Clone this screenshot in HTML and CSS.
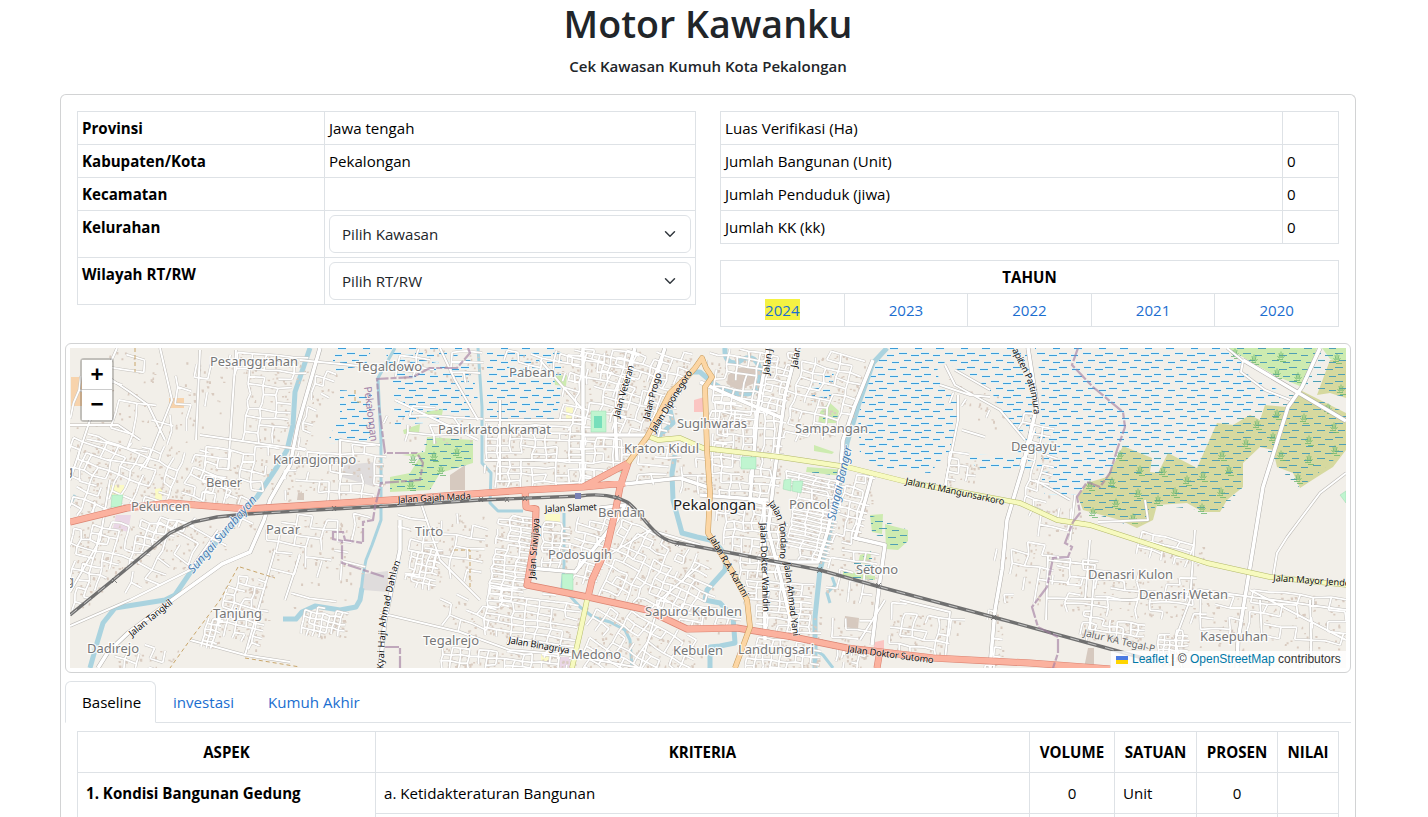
FILE: index.html
```html
<!DOCTYPE html>
<html lang="id">
<head>
<meta charset="utf-8">
<title>Motor Kawanku</title>
<link rel="stylesheet" href="styles.css">
</head>
<body>
<main class="container">
  <h1 class="title">Motor Kawanku</h1>
  <p class="subtitle">Cek Kawasan Kumuh Kota Pekalongan</p>
  <section class="card">
    <div class="summary">
      <table class="table info">
        <tr><th>Provinsi</th><td>Jawa tengah</td></tr>
        <tr><th>Kabupaten/Kota</th><td>Pekalongan</td></tr>
        <tr><th>Kecamatan</th><td></td></tr>
        <tr class="tall"><th>Kelurahan</th><td><div class="select"><span>Pilih Kawasan</span><svg class="chevron" viewBox="0 0 16 16"><path d="m2 5 6 6 6-6"/></svg></div></td></tr>
        <tr class="tall"><th>Wilayah RT/RW</th><td><div class="select"><span>Pilih RT/RW</span><svg class="chevron" viewBox="0 0 16 16"><path d="m2 5 6 6 6-6"/></svg></div></td></tr>
      </table>
      <div class="side">
        <table class="table totals">
          <tr><td>Luas Verifikasi (Ha)</td><td class="num"></td></tr>
          <tr><td>Jumlah Bangunan (Unit)</td><td class="num">0</td></tr>
          <tr><td>Jumlah Penduduk (jiwa)</td><td class="num">0</td></tr>
          <tr><td>Jumlah KK (kk)</td><td class="num">0</td></tr>
        </table>
        <table class="table years">
          <tr><th colspan="5">TAHUN</th></tr>
          <tr><td><a class="current">2024</a></td><td><a>2023</a></td><td><a>2022</a></td><td><a>2021</a></td><td><a>2020</a></td></tr>
        </table>
      </div>
    </div>

    <div class="map-frame">
      <div class="map">
        <svg class="tiles" viewBox="70 348 1276 320">
          <defs>
            <path id="dashes" d="M1 3.5h8M14 5.5h8M26 3.5h7M37 5.5h8M4 10.5h7M16 12.5h8M29 10.5h8M41 12.5h5M0 12.5h2M1 17.5h8M13 19.5h7M25 17.5h8M37 19.5h8M5 24.5h8M18 26.5h7M30 24.5h7M41 26.5h5M0 26.5h2"/>
            <pattern id="marsh" width="46" height="28" patternUnits="userSpaceOnUse"><use href="#dashes" class="marsh-glow"/><use href="#dashes" class="marsh-dash"/></pattern>
            <pattern id="swamp" width="46" height="28" patternUnits="userSpaceOnUse"><use href="#dashes" class="swamp-dash"/></pattern>
            <path id="tuft" class="tuft" d="M-3.5 0l2 2.5M-2 -3l1 5M0 -4.5v6.5M2 -3l-1 5M3.5 0l-2 2.5M-4 3.5h6M-1 5.5h6"/>
            <path id="local" d="M320 348L298 425L290 465L270 500L264 520L250 552L222 564L172 600L128 633L108 652L98 668M583 348V485M635 348L615 415L617 460M665 348L645 405M583 435H650M768 348L758 405L750 500L770 505M797 348L785 395L775 470L768 530L780 575L795 640M700 382L740 400L782 418M700 495L768 500M625 484L680 478L710 488M873 360L855 405L843 440L841 465L828 530L818 562H788M872 475L855 538L885 545L880 580L872 645M764 500L765 640M600 508L625 505L617 520L575 572L530 568M400 520V550L385 620L380 668M1028 348L1037 405L1022 470L1007 520L1002 570L995 610L990 668M1243 360L1346 421M1320 348L1302 387L1288 407L1263 487L1250 567L1238 640L1237 668"/>
            <path id="lane" d="M117 348L105 375L70 480M380 613L460 632L510 650L570 655L640 668M1022 470L1035 428M1227 348L1243 361L1241 372L1265 390L1290 400M1346 473L1320 493L1287 537L1277 553L1273 577M945 365L955 385L1000 410L1025 440M940 385L970 395L990 397M955 370L990 390M958 395V420L945 485M962 430L985 437M70 626L130 600L190 570L218 530M70 425H118L140 440M300 360L420 372M100 372L130 392L148 405L165 440M160 348L172 400L150 455L140 470M200 435L305 450M200 350L196 440M236 350L228 470M70 592L100 540L110 480M190 640L245 655L290 662M245 655L275 550M300 555L285 600M340 480V440L380 445M440 348L455 380L478 420M500 400V480M540 360L583 410M485 420H583M485 460H583M395 400L478 440M420 500L440 560L480 600M640 668L660 600L700 565M600 560L650 530L700 545M900 600L950 612L945 660M885 600L860 640M1047 560L1095 565L1090 630M1047 598L1130 600L1200 590L1346 610M1090 540L1085 600M1195 530L1190 600L1175 640L1182 668M1250 590L1346 640M1310 600L1312 668M1260 600L1262 640M1048 555L1046 620M1145 500L1148 520L1098 522M1075 495L1070 540M1035 480L1070 500"/>
            <path id="trunk" d="M70 522L127 508L170 503L247 509L390 500L457 495L527 490L583 487L625 483M583 487L628 463L620 487L615 513L607 547L592 580L588 597M525 490L526 507L536 509L535 540L527 585L588 597L647 610L687 629L737 628L793 637L847 648L933 658L1030 663L1110 669M880 650L877 668"/>
            <path id="secondary" d="M650 437L658 440L680 438L703 448L780 457L847 467L907 482L1020 503L1057 520L1090 525L1207 563L1270 577L1347 585M587 600L580 633L572 668"/>
            <path id="primary" d="M628 463L647 437L670 393L687 377L695 368L702 358L706 368L712 377L705 387L707 450L710 493L708 533L733 573L747 600L750 627L735 668"/>
            <path id="railway" d="M70 615L113 580L170 533L193 522L217 517L247 514L333 509L390 506L480 500L580 496Q600 493 618 498L627 502C642 512 652 537 673 542L710 549L820 570L880 587L993 617L1103 647L1150 660"/>
            <path id="kyai" d="M383 678L386 620L397 570L408 545"/>
            <path id="tondano" d="M768 504Q785 522 779 562"/>
            <path id="pattimura" d="M1012 350L1026 378Q1033 395 1034 418"/>
          </defs>
          <rect class="land" x="70" y="348" width="1276" height="320"/>

          <g class="wet">
            <path d="M888 348H1222L1243 360V372L1268 385L1290 395L1262 406L1230 424L1214 428L1196 468L1168 455L1160 472L1150 470L1120 446L1112 470L1090 482L1075 495L1045 495L1040 470L1018 470L980 470L960 453L945 455L930 473L885 470L860 455L858 415L875 363Z"/>
            <path d="M333 348H372L366 365L333 372ZM340 390L372 392L370 446L327 443L340 415ZM392 370L470 358L478 400L468 420L395 425ZM487 348H562L560 400L555 422L487 420ZM385 348H465L455 358L390 372ZM811 380L825 370L834 368L832 398L812 402ZM1308 362L1318 348L1330 348L1316 380L1304 392Z"/>
          </g>
          <path class="land" d="M935 372L945 362L992 392L1000 412L1024 436L1015 458L962 452L950 448L957 425V402ZM1028 348H1035L1042 385L1040 430L1030 432L1033 400Z"/>

          <g class="green">
            <path d="M427 437L473 440V463L440 473L430 490L390 492V477L410 473L420 457L402 455L425 452ZM403 430L420 424L419 433L404 434ZM425 412L443 409L442 415L426 417ZM554 376L567 375L566 386L555 385Z"/>
            <path d="M820 412L829 402L839 411L836 423L818 423ZM807 467L845 470L843 476L806 472ZM870 515L883 514L882 534L872 532ZM885 524L908 530V541L898 550L886 549ZM860 555L871 551L870 564L858 563ZM843 571L875 576V580L843 577ZM814 445L834 452L832 454L814 451Z"/>
            <path d="M1227 348H1317L1302 387L1274 375ZM1322 348H1346V366L1330 359Z"/>
          </g>
          <path class="olive" d="M1123 446L1152 458L1150 472L1158 473L1168 453L1197 468L1217 423L1233 425L1250 415L1260 420L1265 405L1287 407L1300 390L1346 413V450L1333 467L1317 477L1300 488L1293 473L1277 467L1273 450L1260 447L1243 463V487L1227 500L1220 512H1203L1187 503L1157 505L1153 520L1137 528L1120 520L1083 510L1078 497L1087 483L1107 477ZM1330 360H1346V398L1330 393L1317 395Z"/>
          <g class="swamp">
            <path d="M1123 446L1168 453L1197 468L1217 423L1265 405L1300 390L1346 413V450L1300 488L1277 467L1260 447L1243 463V487L1220 512L1157 505L1137 528L1083 510L1078 497L1107 477ZM1227 348H1346V398L1330 393L1302 387L1274 375Z"/>
            <path d="M427 437L473 440V463L440 473L430 490L390 492V477L410 473L420 457ZM820 412L839 411L836 423L818 423ZM807 467L845 470L843 476L806 472ZM870 515L908 530V541L898 550L872 532ZM843 571L871 551L875 580L843 577Z"/>
          </g>
          <g id="tufts"></g>

          <path class="sand" d="M71 377H84V406H71ZM169 398H184V408H169Z"/>
          <path class="school" d="M109 485H124V496H109ZM155 489L162 488V500L155 499ZM566 407L573 408V419H566ZM545 514H560V522H545ZM541 651H550V661H541Z"/>
          <path class="industry" d="M344 465L375 462V487L342 477ZM363 574L388 571V592L363 590Z"/>
          <path class="market" d="M116 515H131L128 532L113 528ZM560 657H570V668H560Z"/>
          <path class="hospital" d="M694 400L708 396V412H694ZM875 642L884 640V650H873Z"/>
          <path class="building" d="M728 375L738 368L755 366L757 382L738 390L727 384ZM845 616L859 618L858 629L844 627ZM298 493H304V500H297ZM450 475L465 465V490H450ZM1088 648H1094V668H1084Z"/>

          <g class="water">
            <path d="M310 348L295 392L293 425L287 450L277 467L257 497L233 523L192 570L175 595L165 600L115 608L103 623L97 643L90 668"/>
            <path class="thin" d="M395 348L378 378L379 400L381 440L381 490L381 520L372 545L366 560L363 575L360 600"/>
            <path d="M362 588L360 600L356 607L340 610L315 606L302 612L296 619L283 619"/>
            <path class="thin" d="M478 348L482 407V463L491 473L490 503L498 511H523M564 513V567L562 587L580 607L593 617L610 622L625 630L630 640L632 668"/>
            <path d="M725 348Q724 364 737 363Q754 350 760 369Q762 392 747 394Q730 395 713 383L700 372L690 372M670 410L673 423L658 437M675 455L672 473L673 500L682 533L697 537L710 540Q728 550 725 570L707 590L705 600L720 603L733 617L735 643L720 646L710 647V668"/>
            <path d="M887 348L873 363L860 400L847 443L843 467L837 497L828 540L820 570L815 617V668"/>
            <path class="thin" d="M815 650L823 655L833 668M832 577L835 585L827 593L830 603M70 505L75 495"/>
          </g>

          <g id="buildings" class="houses"></g>
          <path id="street-casing" class="street-casing"/>
          <use href="#lane" class="lane-casing"/>
          <use href="#local" class="local-casing"/>
          <path id="street-fill" class="street-fill"/>
          <use href="#lane" class="lane"/>
          <use href="#local" class="local"/>
          <path class="park" d="M112 495H123L121 507H111ZM741 457H756V469H741ZM784 480L791 479V491L783 489ZM793 481H803L801 493L792 491ZM562 574H573V590H562ZM591 411H606V432H591ZM620 472L624 468V477ZM1340 495L1346 491V503Z"/>
          <path class="pitch" d="M594 416H602V428H594Z"/>

          <use href="#trunk" class="trunk-casing"/><use href="#trunk" class="trunk"/>
          <use href="#secondary" class="secondary-casing"/><use href="#secondary" class="secondary"/>
          <use href="#primary" class="primary-casing"/><use href="#primary" class="primary"/>
          <use href="#railway" class="rail"/><use href="#railway" class="rail-dash"/>
          <path class="crossing" d="M332 506l4 5m0-5l-4 5M479 497l4 5m0-5l-4 5M505 497l4 5m0-5l-4 5M523 496l4 5m0-5l-4 5M615 495l4 5m0-5l-4 5M675 541l4 5m0-5l-4 5M817 567l5 6m0-6l-5 6M876 583l5 5m0-5l-5 5M991 615l5 5m0-5l-5 5M112 578l5 5m0-5l-5 5"/>
          <rect class="station" x="575" y="493" width="6" height="6"/>
          <path class="border-line" d="M1078 348L1072 365L1093 387L1123 412L1125 427L1117 450L1110 473L1100 487L1087 482L1077 497L1080 513L1073 522L1065 543L1072 547L1068 557L1053 558L1047 587L1032 607L1038 627L1058 637V653L1053 668M468 348L470 353L457 368L430 368L413 377L377 379L379 407L385 453H417L423 463L420 480L381 483L375 507L373 520L363 522V543L345 540L343 532H333V539L342 541V563L385 577M385 647H400V668"/>
          <path class="track" d="M135 348V372M238 567L220 600L190 640L170 668M240 567L275 578M454 550H470V590M245 658L300 667M355 390V402H363"/>

          <g class="place">
            <text x="210" y="366" textLength="88">Pesanggrahan</text>
            <text x="356" y="371" textLength="66">Tegaldowo</text>
            <text x="509" y="377" textLength="46">Pabean</text>
            <text x="438" y="434" textLength="113">Pasirkratonkramat</text>
            <text x="273" y="464" textLength="83">Karangjompo</text>
            <text x="206" y="487" textLength="36">Bener</text>
            <text x="131" y="511" textLength="59">Pekuncen</text>
            <text x="266" y="534" textLength="34">Pacar</text>
            <text x="415" y="536" textLength="28">Tirto</text>
            <text x="213" y="618" textLength="49">Tanjung</text>
            <text x="87" y="653" textLength="52">Dadirejo</text>
            <text x="423" y="645" textLength="56">Tegalrejo</text>
            <text x="571" y="659" textLength="50">Medono</text>
            <text x="548" y="559" textLength="64">Podosugih</text>
            <text x="598" y="517" textLength="47">Bendan</text>
            <text x="624" y="453" textLength="75">Kraton Kidul</text>
            <text x="677" y="428" textLength="70">Sugihwaras</text>
            <text x="795" y="433" textLength="73">Sampangan</text>
            <text x="789" y="509" textLength="41">Poncol</text>
            <text x="856" y="574" textLength="42">Setono</text>
            <text x="645" y="616" textLength="97">Sapuro Kebulen</text>
            <text x="673" y="655" textLength="50">Kebulen</text>
            <text x="738" y="654" textLength="76">Landungsari</text>
            <text x="1011" y="451" textLength="46">Degayu</text>
            <text x="1088" y="579" textLength="85">Denasri Kulon</text>
            <text x="1139" y="599" textLength="89">Denasri Wetan</text>
            <text x="1200" y="641" textLength="68">Kasepuhan</text>
            <text class="city" x="673" y="510" textLength="83">Pekalongan</text>
            <text x="65" y="475">g</text>
            <text x="66" y="585">g</text>
          </g>
          <g class="road-name">
            <text transform="translate(398 503) rotate(-3)" textLength="73">Jalan Gajah Mada</text>
            <text transform="translate(545 512) rotate(-2)" textLength="52">Jalan Slamet</text>
            <text transform="translate(535 579) rotate(-86)" textLength="61">Jalan Sriwijaya</text>
            <text transform="translate(619 418) rotate(-74)" textLength="54">Jalan Veteran</text>
            <text transform="translate(649 420) rotate(-75)" textLength="48">Jalan Progo</text>
            <text transform="translate(655 433) rotate(-58)" textLength="71">Jalan Diponegoro</text>
            <text transform="translate(769 375) rotate(-83)">Jalan J</text>
            <text transform="translate(797 368) rotate(-80)">Jalan</text>
            <text transform="translate(132 637) rotate(-39)" textLength="53">Jalan Tangkil</text>
            <text><textPath href="#kyai" textLength="118">n Kyai Haji Ahmad Dahlan</textPath></text>
            <text transform="translate(508 643) rotate(10)" textLength="62">Jalan Binagriya</text>
            <text transform="translate(709 538) rotate(60)" textLength="69">Jalan R.A. Kartini</text>
            <text><textPath href="#tondano" textLength="58">Jalan Tondano</textPath></text>
            <text transform="translate(760 523) rotate(88)" textLength="89">Jalan Dokter Wahidin</text>
            <text transform="translate(784 563) rotate(83)" textLength="74">Jalan Ahmad Yani</text>
            <text transform="translate(905 484) rotate(12)" textLength="101">Jalan Ki Mangunsarkoro</text>
            <text transform="translate(847 652) rotate(7.5)" textLength="87">Jalan Doktor Sutomo</text>
            <text><textPath href="#pattimura" textLength="69">apiten Pattimura</textPath></text>
            <text transform="translate(1273 581) rotate(4)" textLength="77">Jalan Mayor Jende</text>
            <text class="rail-name" transform="translate(1083 636) rotate(13)" textLength="73">Jalur KA Tegal-P</text>
          </g>
          <g class="river-name">
            <text transform="translate(193 574) rotate(-49)" textLength="98">Sungai Surabayan</text>
            <text transform="translate(835 521) rotate(-77)" textLength="76">Sungai Banger</text>
          </g>
          <text class="district-name" transform="translate(364 387) rotate(83)" textLength="55">Pekalongan</text>
        </svg>
        <div class="zoom"><a class="zoom-in">+</a><a>−</a></div>
        <div class="attribution"><svg class="flag" viewBox="0 0 12 8"><path class="flag-top" d="M0 0h12v4H0z"/><path class="flag-bottom" d="M0 4h12v4H0z"/></svg><span><a>Leaflet</a> | © <a>OpenStreetMap</a> contributors</span></div>
      </div>
    </div>

    <nav class="tabs"><a class="tab active">Baseline</a><a class="tab">investasi</a><a class="tab">Kumuh Akhir</a></nav>
    <div class="detail">
      <table class="table aspects">
        <colgroup><col class="c-aspek"><col class="c-kriteria"><col class="c-volume"><col class="c-satuan"><col class="c-prosen"><col class="c-nilai"></colgroup>
        <tr><th>ASPEK</th><th>KRITERIA</th><th>VOLUME</th><th>SATUAN</th><th>PROSEN</th><th>NILAI</th></tr>
        <tr><td rowspan="2" class="aspect">1. Kondisi Bangunan Gedung</td><td>a. Ketidakteraturan Bangunan</td><td class="mid">0</td><td>Unit</td><td class="mid">0</td><td></td></tr>
        <tr><td></td><td></td><td></td><td></td><td></td></tr>
      </table>
    </div>
  </section>
</main>
<script src="map.js"></script>
</body>
</html>
```
FILE: styles.css
```css
* { box-sizing: border-box; }
body { margin: 0; width: 1416px; height: 817px; overflow: hidden; background: #fff; color: #212529; font: 15.1px/24px "Open Sans", "Noto Sans", sans-serif; }
a { color: #1b6ed0; text-decoration: none; }
.container { width: 1320px; height: 817px; overflow: hidden; margin: 0 auto; padding: 0 12px; }
.title { margin: 0 0 8px; font-size: 37.6px; line-height: 48px; font-weight: 600; text-align: center; }
.subtitle { margin: 0 0 18px; font-size: 15px; line-height: 20px; font-weight: 600; text-align: center; }
.card { height: 723px; overflow: hidden; border: 1px solid #d2d3d4; border-bottom: 0; border-radius: 6px 6px 0 0; }
.summary { display: grid; grid-template-columns: 619px 619px; gap: 24px; padding: 16px 16px 0; height: 248px; align-items: start; }
.side { display: grid; gap: 16px; }
.table { width: 100%; border-collapse: collapse; table-layout: fixed; color: #000; }
.table td, .table th { height: 33px; padding: 4px; border: 1px solid #dee2e6; text-align: left; vertical-align: top; white-space: nowrap; }
.table th { font-weight: 700; }
.info th { width: 247px; }
.info .tall td, .info .tall th { height: 47px; }
.select { display: flex; justify-content: space-between; align-items: center; height: 38px; padding: 0 12px; border: 1px solid #dee2e6; border-radius: 6px; color: #212529; }
.chevron { width: 16px; height: 12px; fill: none; stroke: #343a40; stroke-width: 2; stroke-linecap: round; stroke-linejoin: round; }
.totals .num { width: 56px; }
.table.years th, .table.years td { text-align: center; }
.current { display: inline-block; height: 21px; line-height: 22px; background: #f5f242; }

.map-frame { margin: 0 4px; height: 330px; padding: 4px; border: 1px solid #d2d3d4; border-radius: 6px; }
.map { position: relative; width: 1276px; height: 320px; overflow: hidden; }
.tiles { display: block; width: 1276px; height: 320px; }
.zoom { position: absolute; left: 10px; top: 10px; width: 34px; border: 2px solid rgba(0,0,0,.2); border-radius: 4px; background-clip: padding-box; }
.zoom a { display: block; height: 30px; background: #fff; color: #000; font: bold 21px/28px "DejaVu Sans Mono", monospace; text-align: center; }
.zoom .zoom-in { height: 30px; border-bottom: 1px solid #ccc; }
.attribution { position: absolute; right: 0; bottom: 0; display: flex; align-items: center; gap: 4px; width: 235px; height: 17px; padding: 0 5px; background: rgba(255,255,255,.8); color: #333; font: 12px/17px "Liberation Sans", sans-serif; white-space: nowrap; }
.attribution a { color: #0078a8; }
.flag { width: 12px; height: 8px; }
.flag-top { fill: #4c7be1; }
.flag-bottom { fill: #ffd500; }

.land { fill: #f2efe9; }
.wet { fill: url(#marsh); }
.marsh-glow { fill: none; stroke: #dcf2f8; stroke-width: 3; }
.marsh-dash { fill: none; stroke: #3d9bd6; stroke-width: 1.2; }
.swamp { fill: url(#swamp); }
.swamp-dash { fill: none; stroke: #4f9fb4; stroke-width: 1; }
.green { fill: #cdebb0; }
.olive { fill: #d6d99f; }
.tuft { fill: none; stroke: #6cb86e; stroke-width: .8; }
.park { fill: #c0f5d0; stroke: #9ed9b0; stroke-width: .5; }
.pitch { fill: #77dfbb; }
.sand { fill: #f7d3ac; }
.school { fill: #fbfac5; }
.industry { fill: #dfdcdc; }
.market { fill: #ead7e6; }
.hospital { fill: #fbc5c2; }
.building { fill: #d6c9bf; }
.houses { fill: #d9cbc0; }
.water { fill: none; stroke: #aad3df; stroke-width: 5; stroke-linejoin: round; }
.water .thin { stroke-width: 3; }
.street-casing, .street-fill, .lane, .lane-casing, .local, .local-casing, .trunk, .trunk-casing, .primary, .primary-casing, .secondary, .secondary-casing { fill: none; stroke-linejoin: round; }
.street-casing { stroke: #c4c1bd; stroke-width: 2.7; }
.street-fill { stroke: #fff; stroke-width: 1.8; }
.lane-casing { stroke: #bdbab6; stroke-width: 3; }
.lane { stroke: #fff; stroke-width: 2; }
.local-casing { stroke: #b0adaa; stroke-width: 4.6; }
.local { stroke: #fff; stroke-width: 3.6; }
.trunk-casing { stroke: #db8371; stroke-width: 7; }
.trunk { stroke: #fbb29f; stroke-width: 5.8; }
.primary-casing { stroke: #c59a5a; stroke-width: 5.6; }
.primary { stroke: #fcd6a4; stroke-width: 4.6; }
.secondary-casing { stroke: #b3b96a; stroke-width: 5.4; }
.secondary { stroke: #f7fabf; stroke-width: 4.4; }
.rail { fill: none; stroke: #707070; stroke-width: 3.4; }
.rail-dash { fill: none; stroke: #ccc; stroke-width: .9; stroke-dasharray: 9 9; }
.crossing { fill: none; stroke: #666; stroke-width: .8; }
.station { fill: #7a81b5; }
.border-line { fill: none; stroke: #a37fa3; stroke-width: 2.2; stroke-opacity: .65; stroke-dasharray: 14 2 6 2; }
.track { fill: none; stroke: #c9a66b; stroke-width: 1; stroke-dasharray: 4 3; }
.place, .road-name, .river-name { font-family: "Noto Sans", sans-serif; paint-order: stroke; stroke: #fff; stroke-opacity: .85; stroke-width: 2.5; stroke-linejoin: round; }
.place { fill: #777; font-size: 13px; }
.place .city { fill: #222; font-size: 15px; }
.road-name { fill: #111; font-size: 9.4px; stroke-width: 1.2; stroke-opacity: .5; }
.road-name .rail-name { fill: #666; font-size: 10px; }
.river-name { fill: #4d80b3; font-size: 12px; font-style: italic; stroke-width: 1.5; }
.district-name { fill: #a080a5; font: 10.5px "Noto Sans", sans-serif; }

.tabs { display: flex; margin: 8px 4px 0; height: 42px; border-bottom: 1px solid #dee2e6; }
.tab { height: 42px; padding: 8px 16px; border: 1px solid transparent; border-radius: 6px 6px 0 0; }
.tab.active { width: 91px; color: #000; background: #fff; border-color: #dee2e6 #dee2e6 #fff; }
.detail { padding: 8px 16px; }
.table.aspects td, .table.aspects th { height: 41px; padding: 8px; }
.table.aspects th, .table.aspects .mid { text-align: center; }
.table.aspects .aspect { font-weight: 700; }
.c-aspek { width: 298px; }
.c-kriteria { width: 654px; }
.c-volume { width: 85px; }
.c-satuan { width: 82px; }
.c-prosen { width: 81px; }
.c-nilai { width: 61px; }
```
FILE: map.js
```js
// Residential blocks: [outline, rotation in degrees, block width, block height, density]
const blocks = [
  ["70,348 165,348 150,430 100,500 70,515", 12, 20, 15, .5],
  ["165,348 235,355 200,420 165,440", 8, 16, 14, .5],
  ["236,348 300,348 280,440 235,440", 5, 14, 8, .75],
  ["70,430 200,450 250,500 170,500 70,515", 22, 11, 9, .65],
  ["195,440 275,445 255,500 190,490", 8, 12, 9, .65],
  ["70,525 180,515 190,522 110,575 70,608", 14, 9, 8, .75],
  ["150,520 250,515 200,560 120,590", 28, 14, 11, .5],
  ["270,515 370,512 340,560 255,560", 9, 14, 10, .6],
  ["290,450 375,440 378,500 275,500", 3, 11, 10, .65],
  ["310,370 330,370 300,450 292,440", 15, 9, 8, .7],
  ["232,570 265,575 255,650 215,625", 14, 9, 7, .75],
  ["205,620 222,610 215,650 200,640", 14, 5, 6, .9],
  ["305,605 345,612 340,635 298,628", 12, 6, 6, .9],
  ["265,550 380,560 350,600 270,600", 12, 24, 20, .4],
  ["390,515 480,510 480,575 405,575", 8, 15, 11, .55],
  ["410,545 440,550 430,585 405,580", 12, 6, 6, .85],
  ["385,340 480,348 480,375 385,375", 5, 17, 10, .5],
  ["385,400 480,420 480,440 385,440", 2, 24, 9, .5],
  ["485,348 610,348 610,375 560,380", 12, 12, 9, .6],
  ["485,420 582,422 582,485 485,487", 2, 12, 7, .8],
  ["560,350 635,350 615,415 560,430", 12, 13, 8, .75],
  ["610,350 690,350 660,430 615,430", 18, 9, 8, .8],
  ["583,437 625,437 625,460 583,483", 2, 9, 8, .75],
  ["630,440 705,455 705,490 630,480", 2, 15, 9, .65],
  ["497,515 530,515 525,590 495,610 480,570", 8, 12, 5, .9],
  ["540,520 565,520 562,565 540,565", 4, 9, 5, .85],
  ["565,515 610,515 585,580 570,580", 17, 12, 7, .75],
  ["620,505 700,550 710,600 670,610 595,590", 25, 9, 8, .75],
  ["480,580 520,590 580,600 570,660 480,630", 8, 13, 7, .85],
  ["440,590 480,590 500,640 440,620", 22, 14, 11, .55],
  ["440,645 575,655 565,668 440,668", 5, 9, 7, .8],
  ["595,600 640,612 700,635 680,668 580,668", 32, 10, 9, .75],
  ["640,600 700,600 740,625 690,628", 8, 12, 8, .7],
  ["705,348 765,348 755,410 710,450", 8, 10, 8, .75],
  ["710,400 780,410 770,500 710,495", 4, 10, 8, .8],
  ["768,350 790,350 780,410 760,410", 12, 8, 6, .8],
  ["800,350 865,350 850,390 838,430 785,440 785,385", 14, 12, 8, .75],
  ["785,470 840,480 820,560 785,555", 12, 15, 4, .9],
  ["710,500 780,505 780,580 735,570", 4, 9, 8, .75],
  ["740,580 810,580 812,640 752,627", 4, 11, 6, .85],
  ["752,635 815,645 812,668 740,668", 6, 8, 7, .75],
  ["845,475 870,475 850,545 833,540", 13, 9, 7, .65],
  ["833,545 880,550 870,600 825,590", 7, 12, 10, .6],
  ["822,605 870,615 865,650 820,645", 5, 13, 10, .5],
  ["885,600 955,620 940,655 875,645", 8, 12, 8, .7],
  ["990,540 1060,540 1050,600 1000,580", 9, 15, 12, .45],
  ["1022,410 1048,420 1045,510 1020,505", 15, 11, 9, .7],
  ["950,450 970,455 967,480 945,480", 8, 10, 7, .7],
  ["1045,500 1080,500 1070,540 1030,530", 13, 14, 11, .5],
  ["1050,555 1195,575 1195,620 1055,610", 5, 14, 9, .55],
  ["1135,525 1200,542 1195,565 1130,550", 15, 13, 8, .7],
  ["1080,610 1140,620 1140,640 1080,635", 8, 7, 6, .8],
  ["1155,630 1185,630 1185,660 1155,660", 3, 6, 5, .9],
  ["1180,585 1245,590 1235,655 1200,640", 5, 15, 12, .6],
  ["1245,585 1346,598 1346,645 1250,640", 6, 16, 11, .6],
  ["990,590 1005,590 1000,668 985,668", 3, 8, 9, .5],
  ["930,370 990,390 1000,440 945,390", 25, 14, 11, .4],
  ["120,640 170,640 160,668 110,668", 18, 12, 10, .6],
  ["835,640 870,645 860,668 840,668", 5, 7, 7, .7]
];

let seed = 71;
const rnd = () => (seed = (seed * 16807) % 2147483647) / 2147483647;
const inside = (x, y, poly) => {
  let hit = false;
  for (let i = 0, j = poly.length - 1; i < poly.length; j = i++) {
    const [ax, ay] = poly[i], [bx, by] = poly[j];
    if ((ay > y) !== (by > y) && x < (bx - ax) * (y - ay) / (by - ay) + ax) hit = !hit;
  }
  return hit;
};

let streets = "", houses = "";
for (const [outline, deg, w, h, density] of blocks) {
  const poly = outline.split(" ").map(p => p.split(",").map(Number));
  const cx = poly.reduce((s, p) => s + p[0], 0) / poly.length;
  const cy = poly.reduce((s, p) => s + p[1], 0) / poly.length;
  const c = Math.cos(deg * Math.PI / 180), s = Math.sin(deg * Math.PI / 180);
  const nodes = new Map();
  const node = (i, j) => {
    const key = i + "," + j;
    if (!nodes.has(key)) {
      const u = (i + (rnd() - .5) * .28) * w, v = (j + (rnd() - .5) * .28) * h;
      nodes.set(key, [cx + u * c - v * s, cy + u * s + v * c]);
    }
    return nodes.get(key);
  };
  const n = Math.ceil(110 / Math.min(w, h));
  for (let i = -n; i < n; i++) for (let j = -n; j < n; j++) {
    const a = node(i, j);
    if (!inside(a[0], a[1], poly)) continue;
    for (const b of [node(i + 1, j), node(i, j + 1)])
      if (rnd() < density) streets += `M${a[0].toFixed(1)} ${a[1].toFixed(1)}L${b[0].toFixed(1)} ${b[1].toFixed(1)}`;
    for (let k = 0; k < 4; k++) if (rnd() < .5)
      houses += `M${(a[0] + rnd() * w).toFixed(1)} ${(a[1] + rnd() * h).toFixed(1)}h${(1 + rnd() * 2).toFixed(1)}v${(1 + rnd() * 2).toFixed(1)}h-2z`;
  }
}
document.getElementById("street-casing").setAttribute("d", streets);
document.getElementById("street-fill").setAttribute("d", streets);
document.getElementById("buildings").innerHTML = `<path d="${houses}"/>`;

const tufts = [[1120,455],[1140,470],[1163,471],[1187,480],[1203,476],[1222,455],[1229,470],[1246,443],[1257,424],[1277,414],[1273,437],[1281,455],[1304,418],[1309,440],[1309,459],[1334,427],[1335,450],[1328,408],[1341,389],[1298,478],[1221,492],[1202,508],[1175,492],[1158,500],[1138,493],[1112,482],[1090,485],[1116,503],[1133,518],[1093,512],[1235,353],[1254,359],[1281,356],[1277,373],[1298,377],[1337,358],[413,459],[434,456],[457,452],[441,470],[411,485]];
document.getElementById("tufts").innerHTML = tufts.map(([x, y]) => `<use href="#tuft" x="${x}" y="${y}"/>`).join("");
```
